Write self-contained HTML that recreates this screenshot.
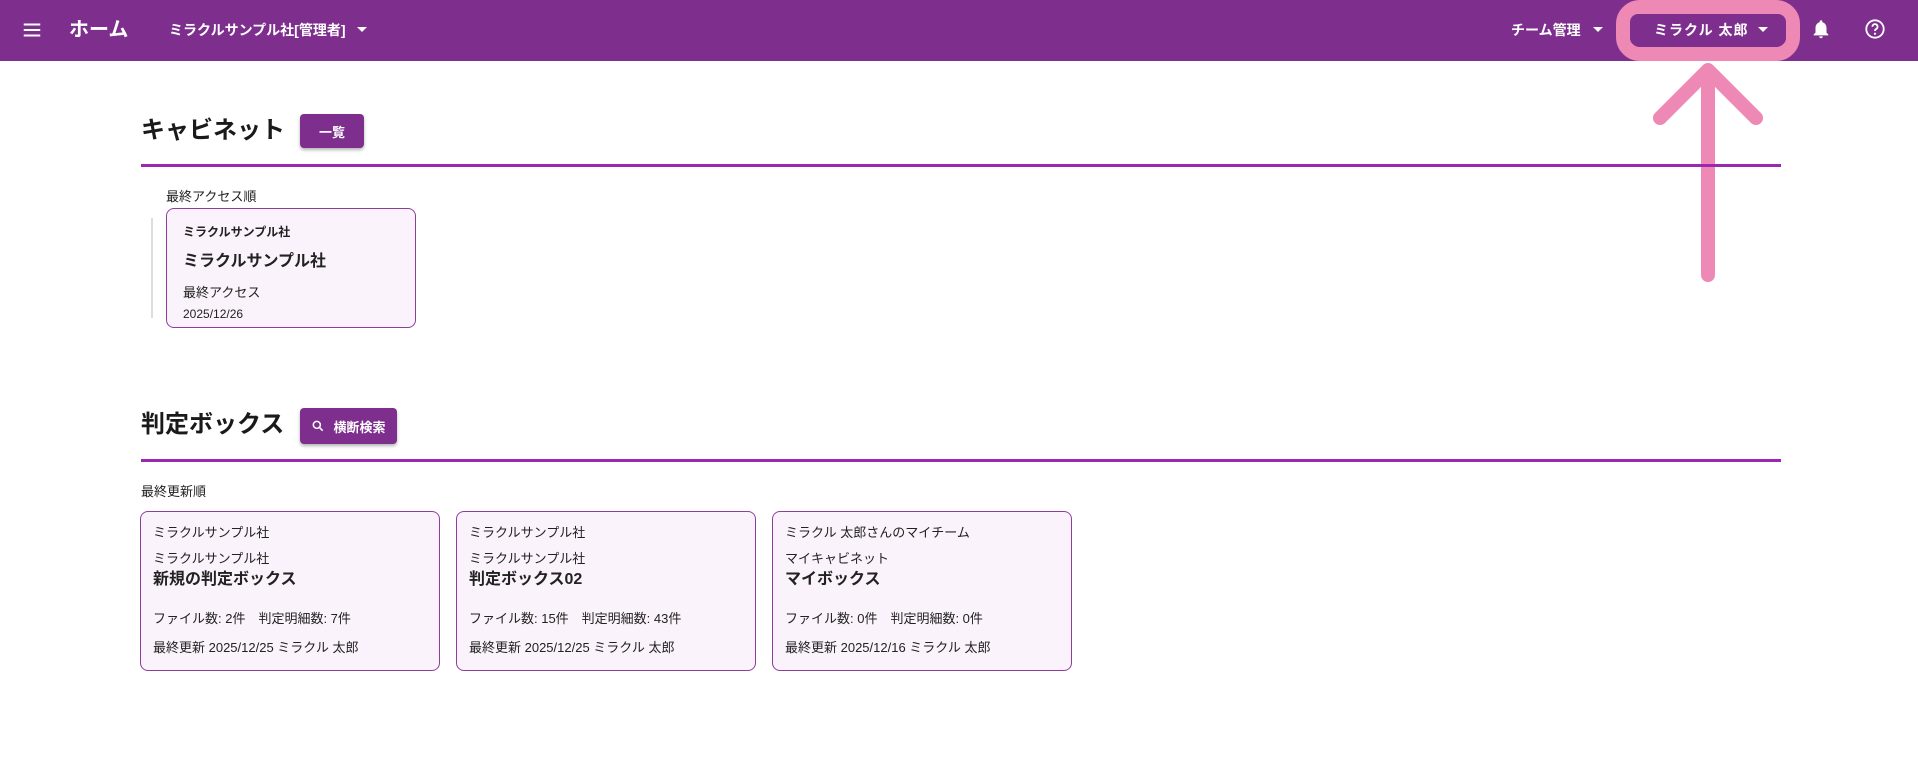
<!DOCTYPE html>
<html><head><meta charset="utf-8"><style>
*{margin:0;padding:0;box-sizing:border-box}
body{width:1918px;height:761px;background:#fff;font-family:"Liberation Sans","Noto Sans CJK JP",sans-serif;color:#222;position:relative;overflow:hidden}
.a{position:absolute;white-space:nowrap}
.hdr{position:absolute;left:0;top:0;width:1918px;height:61px;background:#7E2F8E}
.w{color:#fff;font-weight:bold}
.btn{position:absolute;background:#7E2F8E;border-radius:4px;box-shadow:0 2px 3px rgba(0,0,0,.3);color:#fff;font-weight:bold;font-size:13px;display:flex;align-items:center;justify-content:center}
.line{position:absolute;left:141px;width:1640px;height:3px;background:#9C27B0}
.card{position:absolute;border:1px solid #8E3C9E;border-radius:8px;background:#FBF3FB}
.c{position:absolute;font-size:13px;color:#222;white-space:nowrap;line-height:1}
</style></head><body>
<div class="hdr"></div>
<svg class="a" style="left:21px;top:19px" width="22" height="22" viewBox="0 0 24 24"><path d="M3 6h18M3 12h18M3 18h18" stroke="#fff" stroke-width="2.2"/></svg>
<div class="a w" style="left:69px;top:16px;font-size:20px;line-height:28px">ホーム</div>
<div class="a w" style="left:169px;top:21px;font-size:14px;line-height:18px">ミラクルサンプル社[管理者]</div>
<svg class="a" style="left:357px;top:27px" width="10" height="6"><path d="M0 0h10L5 5z" fill="#fff"/></svg>
<div class="a w" style="left:1511px;top:21px;font-size:14px;line-height:18px">チーム管理</div>
<svg class="a" style="left:1593px;top:27px" width="10" height="6"><path d="M0 0h10L5 5z" fill="#fff"/></svg>
<div class="a" style="left:1616px;top:0;width:184px;height:61px;border:14px solid #EE88B4;border-radius:24px"></div>
<div class="a" style="left:1630px;top:14px;width:156px;height:32px;background:#7E2F8E;border-radius:8px"></div>
<div class="a w" style="left:1654px;top:21px;font-size:14px;line-height:18px;letter-spacing:1px">ミラクル 太郎</div>
<svg class="a" style="left:1758px;top:27px" width="10" height="6"><path d="M0 0h10L5 5z" fill="#fff"/></svg>
<svg class="a" style="left:1810px;top:18px" width="22" height="22" viewBox="0 0 24 24"><path d="M12 22c1.1 0 2-.9 2-2h-4c0 1.1.9 2 2 2zm6-6v-5c0-3.1-1.6-5.6-4.5-6.3V4c0-.8-.7-1.5-1.5-1.5s-1.5.7-1.5 1.5v.7C7.6 5.4 6 7.9 6 11v5l-2 2v1h16v-1l-2-2z" fill="#fff"/></svg>
<svg class="a" style="left:1864px;top:18px" width="22" height="22" viewBox="0 0 24 24"><circle cx="12" cy="12" r="9.5" fill="none" stroke="#fff" stroke-width="2"/><path d="M9.2 9.5a2.8 2.8 0 1 1 4.2 2.4c-.9.6-1.4 1-1.4 2.3" fill="none" stroke="#fff" stroke-width="2"/><circle cx="12" cy="17.2" r="1.2" fill="#fff"/></svg>
<svg class="a" style="left:0;top:0" width="1918" height="761"><path d="M1708 72V275M1660 118L1708 70L1756 118" fill="none" stroke="#EE88B4" stroke-width="14" stroke-linecap="round" stroke-linejoin="round"/></svg>

<div class="a" style="left:141px;top:114px;font-size:24px;font-weight:bold;line-height:34px;color:#1a1a1a">キャビネット</div>
<div class="btn" style="left:300px;top:114px;width:64px;height:34px">一覧</div>
<div class="line" style="top:164px"></div>
<div class="a" style="left:166px;top:186px;font-size:13px">最終アクセス順</div>
<div class="a" style="left:151px;top:218px;width:2px;height:100px;background:#ddd"></div>
<div class="card" style="left:166px;top:208px;width:250px;height:120px"></div>
<div class="c" style="left:183px;top:226px;font-size:12px;font-weight:bold">ミラクルサンプル社</div>
<div class="c" style="left:183px;top:254px;font-size:16px;font-weight:bold">ミラクルサンプル社</div>
<div class="c" style="left:183px;top:286px">最終アクセス</div>
<div class="c" style="left:183px;top:308px;font-size:12px">2025/12/26</div>

<div class="a" style="left:141px;top:408px;font-size:24px;font-weight:bold;line-height:34px;color:#1a1a1a">判定ボックス</div>
<div class="btn" style="left:300px;top:408px;width:97px;height:36px"><svg width="14" height="14" viewBox="0 0 24 24" style="margin-right:8px"><circle cx="10" cy="10" r="6" fill="none" stroke="#fff" stroke-width="2.6"/><path d="M14.5 14.5L20 20" stroke="#fff" stroke-width="2.6"/></svg>横断検索</div>
<div class="line" style="top:459px"></div>
<div class="a" style="left:141px;top:481px;font-size:13px">最終更新順</div>

<div class="card" style="left:140px;top:511px;width:300px;height:160px"></div>
<div class="c" style="left:153px;top:526px">ミラクルサンプル社</div>
<div class="c" style="left:153px;top:552px">ミラクルサンプル社</div>
<div class="c" style="left:153px;top:572px;font-size:16px;font-weight:bold">新規の判定ボックス</div>
<div class="c" style="left:153px;top:612px">ファイル数: 2件　判定明細数: 7件</div>
<div class="c" style="left:153px;top:641px">最終更新 2025/12/25 ミラクル 太郎</div>

<div class="card" style="left:456px;top:511px;width:300px;height:160px"></div>
<div class="c" style="left:469px;top:526px">ミラクルサンプル社</div>
<div class="c" style="left:469px;top:552px">ミラクルサンプル社</div>
<div class="c" style="left:469px;top:572px;font-size:16px;font-weight:bold">判定ボックス02</div>
<div class="c" style="left:469px;top:612px">ファイル数: 15件　判定明細数: 43件</div>
<div class="c" style="left:469px;top:641px">最終更新 2025/12/25 ミラクル 太郎</div>

<div class="card" style="left:772px;top:511px;width:300px;height:160px"></div>
<div class="c" style="left:785px;top:526px">ミラクル 太郎さんのマイチーム</div>
<div class="c" style="left:785px;top:552px">マイキャビネット</div>
<div class="c" style="left:785px;top:572px;font-size:16px;font-weight:bold">マイボックス</div>
<div class="c" style="left:785px;top:612px">ファイル数: 0件　判定明細数: 0件</div>
<div class="c" style="left:785px;top:641px">最終更新 2025/12/16 ミラクル 太郎</div>
</body></html>
